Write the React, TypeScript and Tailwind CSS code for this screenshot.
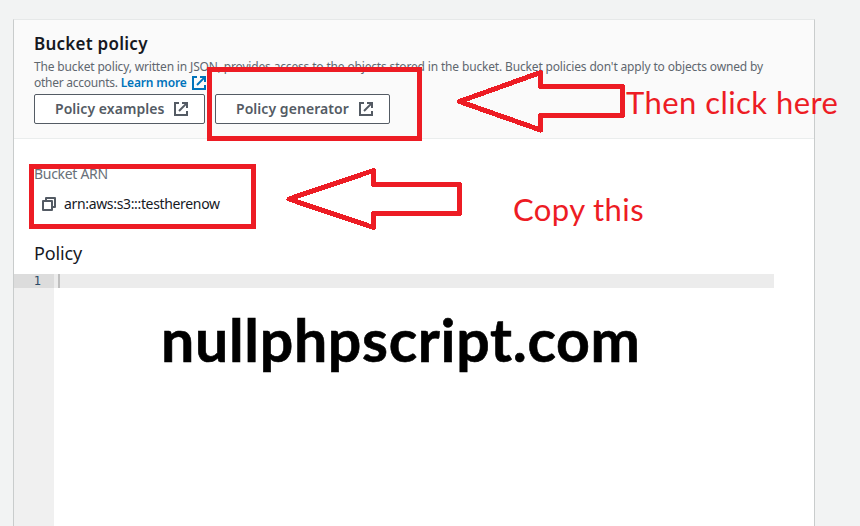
import type { ReactNode } from "react";

const annotationFont = "font-['Lato','Liberation_Sans',sans-serif]";

function ExternalIcon({ className = "" }: { className?: string }) {
  return (
    <svg width="14" height="14" viewBox="0 0 14 14" fill="none" stroke="currentColor" strokeWidth="2" className={`shrink-0 ${className}`}>
      <path d="M5 1H1v12h12V9" />
      <path d="M8 1h5v5" />
      <path d="M12.6 1.4 5 9" />
    </svg>
  );
}

function CopyIcon() {
  return (
    <svg width="14" height="14" viewBox="0 0 14 14" fill="none" stroke="#545b64" strokeWidth="2" strokeLinejoin="round">
      <path d="M1 4h9v9H1z" />
      <path d="M4 4V1h9v9h-3" />
    </svg>
  );
}

function LinkButton({ children, className }: { children: ReactNode; className: string }) {
  return (
    <button className={`flex h-[30px] items-center rounded-[2px] border border-[#545b64] bg-white pb-0.5 pl-5 text-[14px] font-semibold tracking-[0.05px] whitespace-nowrap text-[#545b64] ${className}`}>
      {children}
    </button>
  );
}

function Arrow({ path, className }: { path: string; className: string }) {
  return (
    <svg width="180" height="66" viewBox="0 0 180 66" fill="none" stroke="#ed1c24" strokeWidth="5" strokeLinejoin="round" shapeRendering="crispEdges" className={`absolute ${className}`}>
      <path d={path} />
    </svg>
  );
}

export default function App() {
  return (
    <div className="relative h-[526px] w-[860px] overflow-hidden bg-[#f2f3f3] pt-[19px] pl-[13px] font-['Noto_Sans','Open_Sans',sans-serif]">
      <main className="h-[507px] w-[802px] border border-b-0 border-t-[#e6e8e8] border-r-[#c9cccc] border-l-[#c9cccc] bg-white">
        <header className="h-[119px] border-b border-[#eaeded] bg-[#fafafa] pt-[13px] pl-5">
          <h1 className="h-[26px] text-[17px] leading-[22px] font-semibold tracking-[0.25px] whitespace-nowrap text-[#16191f]">Bucket policy</h1>
          <p className="text-[12px] leading-4 tracking-[-0.16px] whitespace-nowrap text-[#5f676f]">
            The bucket policy, written in JSON, provides access to the objects stored in the bucket. Bucket policies don't apply to objects owned by
          </p>
          <p className="flex h-[19px] text-[12px] leading-4 tracking-[-0.25px] whitespace-nowrap text-[#5f676f]">
            other accounts.&nbsp;
            <a className="flex font-semibold tracking-[-0.15px] text-[#0073bb]">
              <span className="w-[71px]">Learn more</span>
              <ExternalIcon className="mt-px" />
            </a>
          </p>
          <div className="flex gap-2.5">
            <LinkButton className="w-[171px]">
              <span className="w-[119px] text-left">Policy examples</span>
              <ExternalIcon className="mt-0.5" />
            </LinkButton>
            <LinkButton className="w-[175px]">
              <span className="w-[123px] text-left">Policy generator</span>
              <ExternalIcon className="mt-0.5" />
            </LinkButton>
          </div>
        </header>
        <section className="pt-[25px]">
          <div className="h-[30px] pl-5 text-[14px] leading-5 tracking-[-0.3px] text-[#687078]">Bucket ARN</div>
          <div className="flex h-5 items-center gap-2 pl-7 text-[14px] tracking-[-0.34px] text-[#16191f]">
            <CopyIcon />
            <span className="-mt-0.5">arn:aws:s3:::testherenow</span>
          </div>
          <h2 className="mt-7 h-8 pl-5 text-[18px] leading-[22px] tracking-[-0.15px] text-[#16191f]">Policy</h2>
          <div className="flex h-[252px]">
            <div className="w-10 bg-[#f0f0f0]">
              <div className="h-[14px] bg-[#dcdcdc] pr-[13px] text-right font-['DejaVu_Sans_Mono',monospace] text-[12px] leading-[14px] text-[#2b4a66]">1</div>
            </div>
            <div className="h-[14px] w-[720px] bg-[#ececec] pl-1">
              <div className="h-[14px] w-0.5 bg-[#bfbfbf]" />
            </div>
          </div>
        </section>
      </main>

      <div className="absolute top-[67px] left-[207px] h-[74px] w-[215px] border-5 border-[#ed1c24]" />
      <div className="absolute top-[164px] left-[29px] h-[65px] w-[227px] border-5 border-[#ed1c24]" />
      <Arrow path="M6.5 33.5 87.5 4.5V18.5H169.5V47.5H87.5V62Z" className="top-[68px] left-[453px]" />
      <Arrow path="M6 33 90.5 4.5V18.5H176.5V47.5H90.5V61.5Z" className="top-[166px] left-[283px]" />
      <div className={`absolute top-[82px] left-[626px] text-[31px] leading-[40px] tracking-[0.45px] whitespace-nowrap text-[#ed1c24] ${annotationFont}`}>Then click here</div>
      <div className={`absolute top-[189px] left-[513px] text-[31px] leading-[40px] tracking-[0.4px] whitespace-nowrap text-[#ed1c24] ${annotationFont}`}>Copy this</div>
      <div className={`absolute top-[305px] left-[161px] text-[59px] leading-[70px] font-bold tracking-[0.7px] whitespace-nowrap text-black [-webkit-text-stroke:0.6px_black] ${annotationFont}`}>nullphpscript.com</div>
    </div>
  );
}
